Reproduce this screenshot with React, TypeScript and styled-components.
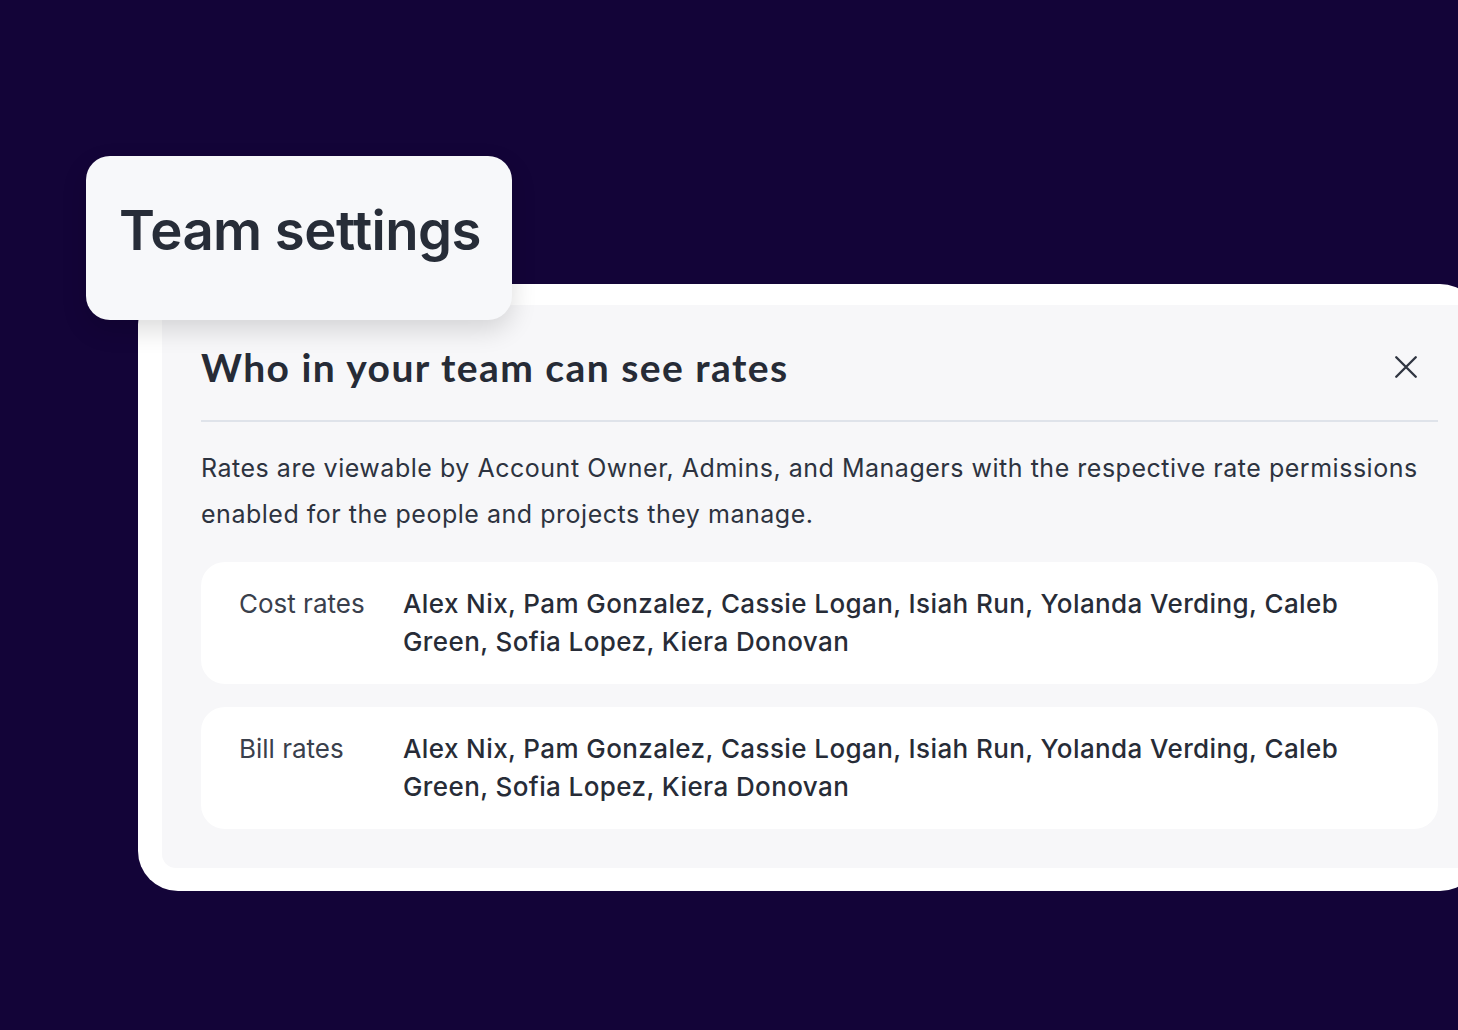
import type { FC } from 'react';
import styled, { createGlobalStyle } from 'styled-components';

const GlobalStyle = createGlobalStyle`
  html, body {
    margin: 0;
    padding: 0;
    background: #130438;
    overflow: hidden;
  }
  body {
    font-family: Inter, "Noto Sans", sans-serif;
    -webkit-font-smoothing: antialiased;
  }
`;

const Page = styled.div`
  width: 1458px;
  height: 1030px;
  padding-top: 156px;
  box-sizing: border-box;
  overflow: hidden;
`;

const Stage = styled.div`
  display: flex;
  flex-direction: column;
  align-items: flex-start;
`;

const TitleCard = styled.div`
  position: relative;
  z-index: 2;
  margin-left: 86px;
  width: 426px;
  height: 164px;
  box-sizing: border-box;
  padding: 0 0 0 33px;
  display: flex;
  align-items: center;
  background: #f7f8fa;
  border-radius: 24px;
  box-shadow: 0 10px 26px rgba(0, 0, 0, 0.14);
`;

const TitleText = styled.h1`
  margin: 0 0 16px;
  font-family: Inter, sans-serif;
  font-weight: 600;
  font-size: 54.5px;
  letter-spacing: -0.55px;
  color: #272d38;
`;

const Frame = styled.div`
  position: relative;
  z-index: 1;
  margin-top: -36px;
  margin-left: 138px;
  width: 1342px;
  box-sizing: border-box;
  padding: 21px 0 23px 24px;
  background: #ffffff;
  border-radius: 40px;
`;

const Panel = styled.section`
  background: #f7f7f9;
  border-radius: 14px 0 0 14px;
  padding: 40px 0 39px 39px;
`;

const Content = styled.div`
  width: 1237px;
`;

const Header = styled.div`
  display: flex;
  align-items: center;
  justify-content: space-between;
  padding: 0 18px 31px 0;
  border-bottom: 2px solid #dfe3ea;
`;

const Heading = styled.h2`
  margin: 0;
  font-family: Lato, sans-serif;
  font-weight: 700;
  font-size: 39px;
  line-height: 44px;
  letter-spacing: 1.45px;
  color: #262b36;
`;

const CloseButton = styled.button`
  border: 0;
  background: transparent;
  padding: 0;
  width: 28px;
  height: 28px;
  display: flex;
  align-items: center;
  justify-content: center;
  cursor: pointer;
  color: #2f3541;
`;

const Description = styled.p`
  margin: 23px 0 25px;
  font-size: 25px;
  line-height: 46px;
  color: #2d3340;
  letter-spacing: 0.52px;
`;

const RateList = styled.div`
  display: flex;
  flex-direction: column;
  gap: 23px;
`;

const RateRow = styled.div`
  display: grid;
  grid-template-columns: 164px 1fr;
  padding: 23px 40px 23px 38px;
  background: #ffffff;
  border-radius: 24px;
  font-size: 26px;
  line-height: 38px;
`;

const RateLabel = styled.div`
  color: #3a404c;
`;

const RateNames = styled.div`
  color: #272c37;
  font-weight: 500;
  letter-spacing: 0.4px;
`;

const CloseIcon: FC = () => (
  <svg width="26" height="26" viewBox="0 0 24 24" fill="none">
    <path
      d="M3 3L21 21M21 3L3 21"
      stroke="currentColor"
      strokeWidth="2.2"
      strokeLinecap="round"
    />
  </svg>
);

const names =
  'Alex Nix, Pam Gonzalez, Cassie Logan, Isiah Run, Yolanda Verding, Caleb Green, Sofia Lopez, Kiera Donovan';

const rates = [
  { label: 'Cost rates', people: names },
  { label: 'Bill rates', people: names },
];

const App: FC = () => (
  <>
    <GlobalStyle />
    <Page>
      <Stage>
        <TitleCard>
          <TitleText>Team settings</TitleText>
        </TitleCard>
        <Frame>
          <Panel>
            <Content>
              <Header>
                <Heading>Who in your team can see rates</Heading>
                <CloseButton aria-label="Close">
                  <CloseIcon />
                </CloseButton>
              </Header>
              <Description>
                Rates are viewable by Account Owner, Admins, and Managers with the
                respective rate permissions enabled for the people and projects
                they manage.
              </Description>
              <RateList>
                {rates.map((r) => (
                  <RateRow key={r.label}>
                    <RateLabel>{r.label}</RateLabel>
                    <RateNames>{r.people}</RateNames>
                  </RateRow>
                ))}
              </RateList>
            </Content>
          </Panel>
        </Frame>
      </Stage>
    </Page>
  </>
);

export default App;
